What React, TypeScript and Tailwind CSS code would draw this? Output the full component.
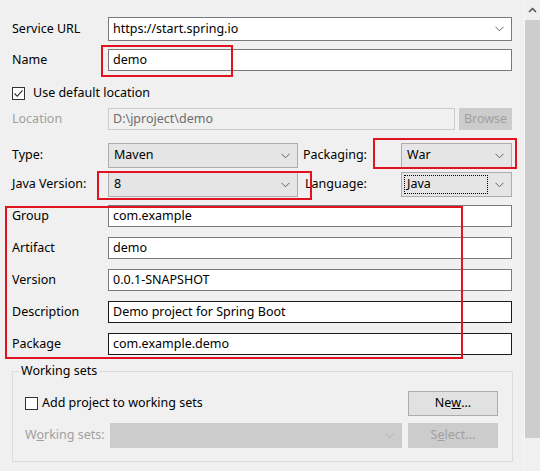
import React from "react";

const font = { fontFamily: '"Noto Sans", "Noto Sans CJK SC", sans-serif' };

function Chevron({ color = "#606060" }: { color?: string }) {
  return (
    <svg width="9" height="6" viewBox="0 0 9 6" className="shrink-0">
      <path d="M0.5 0.8 L4.5 4.8 L8.5 0.8" fill="none" stroke={color} strokeWidth="1" />
    </svg>
  );
}

function TextInput({ value, dark = false, width = "w-[404px]" }: { value: string; dark?: boolean; width?: string }) {
  return (
    <div
      className={`${width} h-[22px] bg-white border ${dark ? "border-[#1a1a1a]" : "border-[#7a7a7a]"} flex items-center px-[4px] text-[12.5px] text-black`}
    >
      {value}
    </div>
  );
}

function ReadCombo({ value, width, focus = false }: { value: string; width: string; focus?: boolean }) {
  return (
    <div className={`${width} h-[25px] bg-[#e5e5e5] border border-[#adadad] flex items-center pl-[2px] pr-[7px] text-[12.5px] text-black`}>
      <div className={`flex-1 h-[19px] flex items-center pl-[2px] ${focus ? "border border-dotted border-black" : "border border-transparent"}`}>{value}</div>
      <div className="w-[16px] flex justify-end">
        <Chevron />
      </div>
    </div>
  );
}

function Label({ children, w = "w-[96px]", gray = false }: { children: React.ReactNode; w?: string; gray?: boolean }) {
  return <div className={`${w} shrink-0 text-[12.5px] ${gray ? "text-[#a0a0a0]" : "text-black"}`}>{children}</div>;
}

export default function App() {
  return (
    <div className="w-[540px] h-[471px] bg-[#f0f0f0] relative overflow-hidden flex" style={font}>
      <div className="w-[524px] shrink-0 pl-[12px] pt-[17px] relative">
        {/* Service URL */}
        <div className="flex items-center h-[24px]">
          <Label>Service URL</Label>
          <div className="w-[404px] h-[24px] bg-white border border-[#7a7a7a] flex items-center pl-[4px] pr-[7px] text-[12.5px]">
            <div className="flex-1">https://start.spring.io</div>
            <Chevron />
          </div>
        </div>
        {/* Name */}
        <div className="flex items-center h-[22px] mt-[8px]">
          <Label>Name</Label>
          <TextInput value="demo" />
        </div>
        {/* Use default location */}
        <div className="flex items-center h-[14px] mt-[15px]">
          <div className="w-[13px] h-[13px] border border-[#333333] bg-white flex items-center justify-center">
            <svg width="11" height="11" viewBox="0 0 11 11">
              <path d="M1.5 5.5 L4.2 8.3 L9.5 2.3" fill="none" stroke="#222" strokeWidth="1.1" />
            </svg>
          </div>
          <div className="ml-[8px] text-[12.5px]">Use default location</div>
        </div>
        {/* Location */}
        <div className="flex items-center h-[22px] mt-[8px]">
          <Label gray>Location</Label>
          <div className="w-[347px] h-[22px] border border-[#cccccc] bg-[#f0f0f0] flex items-center px-[4px] text-[12.5px] text-[#6d6d6d]">
            D:\jproject\demo
          </div>
          <div className="ml-[4px] w-[53px] h-[22px] bg-[#cccccc] flex items-center justify-center text-[12.5px] text-[#a0a0a0]">
            Browse
          </div>
        </div>
        {/* Type / Packaging */}
        <div className="flex items-center h-[25px] mt-[13px]">
          <Label>Type:</Label>
          <ReadCombo value="Maven" width="w-[190px]" />
          <div className="w-[103px] pl-[5px] text-[12.5px]">Packaging:</div>
          <ReadCombo value="War" width="w-[111px]" />
        </div>
        {/* Java Version / Language */}
        <div className="flex items-center h-[25px] mt-[4px]">
          <Label>Java Version:</Label>
          <ReadCombo value="8" width="w-[190px]" />
          <div className="w-[103px] pl-[7px] text-[12.5px]">Language:</div>
          <ReadCombo value="Java" width="w-[111px]" focus />
        </div>
        {/* Text fields */}
        <div className="flex flex-col gap-[10px] mt-[8px]">
          {[
            ["Group", "com.example", false],
            ["Artifact", "demo", false],
            ["Version", "0.0.1-SNAPSHOT", false],
            ["Description", "Demo project for Spring Boot", true],
            ["Package", "com.example.demo", true],
          ].map(([l, v, d]) => (
            <div key={l as string} className="flex items-center h-[22px]">
              <Label>{l}</Label>
              <TextInput value={v as string} dark={d as boolean} />
            </div>
          ))}
        </div>
        {/* Working sets group */}
        <div className="relative mt-[16px] w-[501px] h-[91px] border border-[#dcdcdc]">
          <div className="absolute left-[6px] top-[-10px] bg-[#f0f0f0] px-[2px] text-[12.5px] leading-[18px]">Working sets</div>
          <div className="flex items-center mt-[19px] pl-[12px] h-[25px]">
            <div className="w-[13px] h-[13px] border border-[#333333] bg-white" />
            <div className="ml-[4px] text-[12.5px] flex-1">Add project to working sets</div>
            <div className="w-[90px] h-[25px] mr-[14px] bg-[#e1e1e1] border border-[#adadad] flex items-center justify-center text-[12.5px]">
              Ne<span className="underline">w</span>...
            </div>
          </div>
          <div className="flex items-center mt-[7px] pl-[12px] h-[25px]">
            <div className="w-[85px] text-[12.5px] text-[#a0a0a0]">
              W<span className="underline">o</span>rking sets:
            </div>
            <div className="w-[292px] h-[25px] bg-[#cccccc] flex items-center justify-end pr-[8px]">
              <Chevron color="#b0b0b0" />
            </div>
            <div className="ml-[6px] w-[90px] h-[25px] bg-[#cccccc] flex items-center justify-center text-[12.5px] text-[#a0a0a0]">
              S<span className="underline">e</span>lect...
            </div>
          </div>
        </div>

        {/* Red annotation rectangles */}
        <div className="absolute left-[101px] top-[45px] w-[132px] h-[32px] border-2 border-[#e0141e]" />
        <div className="absolute left-[373px] top-[138px] w-[144px] h-[31px] border-2 border-[#e0141e]" />
        <div className="absolute left-[97px] top-[171px] w-[215px] h-[29px] border-2 border-[#e0141e]" />
        <div className="absolute left-[5px] top-[206px] w-[458px] h-[153px] border-2 border-[#e0141e]" />
      </div>
      {/* Scrollbar */}
      <div className="w-[16px] h-full flex flex-col border-l border-[#f7f7f7]">
        <div className="h-[20px] flex items-center justify-center">
          <svg width="9" height="6" viewBox="0 0 9 6">
            <path d="M1 5 L4.5 1.5 L8 5" fill="none" stroke="#505050" strokeWidth="1.5" />
          </svg>
        </div>
        <div className="h-[418px] bg-[#cdcdcd]" />
      </div>
    </div>
  );
}
